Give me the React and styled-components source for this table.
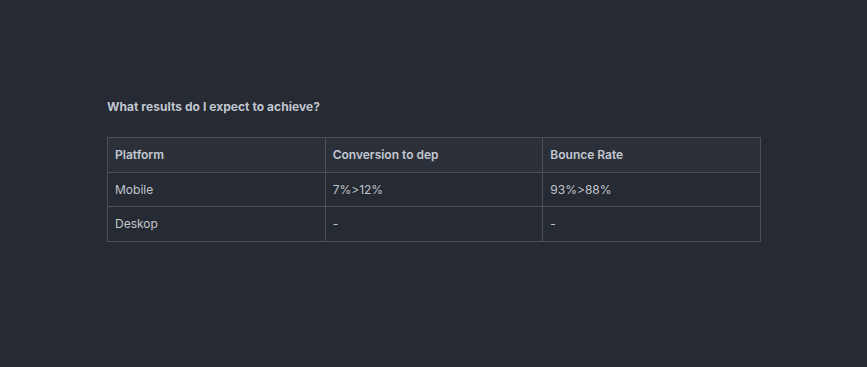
import React from "react";
import styled, { createGlobalStyle } from "styled-components";

const Global = createGlobalStyle`
  html, body { margin: 0; padding: 0; background: #262a32; }
  body { font-family: Inter, "Noto Sans", sans-serif; -webkit-font-smoothing: antialiased; }
`;

const Page = styled.div`
  width: 867px;
  height: 367px;
  box-sizing: border-box;
  padding: 99px 107px 0 107px;
  background: #262a32;
  color: #c5cad3;
`;

const Title = styled.h3`
  margin: 0 0 22px 0;
  font-size: 12px;
  line-height: 16px;
  font-weight: 700;
  letter-spacing: 0.05px;
  color: #c0c6cf;
`;

const Table = styled.table`
  width: 654px;
  border-collapse: collapse;
  table-layout: fixed;
  font-size: 12px;
`;

const Row = styled.tr`
  background: ${(p) => (p.$head ? "#2c3139" : "transparent")};
`;

const Cell = styled.td`
  border: 1px solid #4a505a;
  height: ${(p) => (p.$h ? p.$h : 34)}px;
  padding: 0 7px;
  box-sizing: border-box;
  text-align: left;
  vertical-align: middle;
  line-height: 16px;
  font-weight: ${(p) => (p.$head ? 600 : 400)};
  color: ${(p) => (p.$head ? "#c3c9d2" : "#c0c5ce")};
`;

const rows = [
  { h: 34, cells: ["Mobile", "7%>12%", "93%>88%"] },
  { h: 35, cells: ["Deskop", "-", "-"] },
];

export default function App() {
  return (
    <Page>
      <Global />
      <Title>What results do I expect to achieve?</Title>
      <Table>
        <thead>
          <Row $head>
            {["Platform", "Conversion to dep", "Bounce Rate"].map((h) => (
              <Cell as="th" $head $h={35} key={h}>{h}</Cell>
            ))}
          </Row>
        </thead>
        <tbody>
          {rows.map((r) => (
            <Row key={r.cells[0]}>
              {r.cells.map((c, i) => (
                <Cell $h={r.h} key={i}>{c}</Cell>
              ))}
            </Row>
          ))}
        </tbody>
      </Table>
    </Page>
  );
}
